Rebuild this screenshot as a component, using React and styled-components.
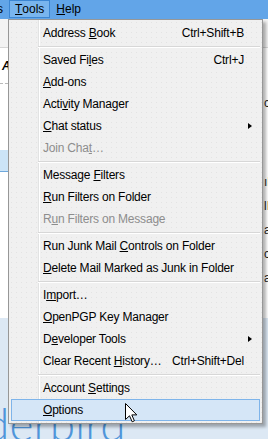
import React from "react";
import styled, { createGlobalStyle } from "styled-components";

const GlobalStyle = createGlobalStyle`
  html, body { margin: 0; padding: 0; }
  body {
    width: 268px;
    height: 439px;
    overflow: hidden;
    font-family: "Liberation Sans", Arial, sans-serif;
    font-size: 12px;
    color: #000;
  }
`;

/* ===== WINDOW BEHIND THE MENU ===== */
const Window = styled.div`
  position: relative;
  display: flex;
  flex-direction: column;
  width: 268px;
  height: 439px;
  overflow: hidden;
  background: #fff;
`;

const MenuBar = styled.div`
  display: flex;
  align-items: stretch;
  height: 19px;
  background: #62a5e8;
  flex-shrink: 0;
`;

const BarItem = styled.div`
  display: flex;
  align-items: center;
  padding: 0 5px;
  margin-left: ${(p) => p.$offset || 0}px;
  border: 1px solid ${(p) => (p.$open ? "#3c86d3" : "transparent")};
  background: ${(p) => (p.$open ? "#79b5ee" : "transparent")};
  box-sizing: border-box;
  height: 18px;
  u { text-decoration: underline; }
`;

const Toolbar = styled.div`
  height: 28px;
  flex-shrink: 0;
  background: #f3f3f3;
  border-bottom: 1px solid #d6d6d6;
`;

const Body = styled.div`
  display: flex;
  height: 270px;
  flex-shrink: 0;
`;

const FolderPane = styled.div`
  flex: 1;
  display: flex;
  flex-direction: column;
`;

const AccountRow = styled.div`
  height: 36px;
  display: flex;
  align-items: center;
  padding-left: 2px;
  font-weight: bold;
  font-style: italic;
  border-bottom: 1px dashed #b9b9b9;
  box-sizing: border-box;
`;

const FolderRow = styled.div`
  height: ${(p) => (p.$selected ? 21 : 22)}px;
  flex-shrink: 0;
  background: ${(p) => (p.$selected ? "#cce4f7" : "transparent")};
  border-bottom: ${(p) => (p.$selected ? "1px solid #6ea8dc" : "none")};
`;

const MessageStrip = styled.div`
  width: 6px;
  overflow: hidden;
  display: flex;
  flex-direction: column;
  padding-top: 44px;
  white-space: nowrap;
  color: #222;
`;

const MessageCell = styled.div`
  height: ${(p) => p.$h}px;
  line-height: ${(p) => p.$h}px;
  flex-shrink: 0;
  padding-left: 2px;
`;

const StartPane = styled.div`
  flex: 1;
  background: #dce8f4;
  display: flex;
  align-items: flex-end;
  overflow: hidden;
`;

const Logo = styled.div`
  font-family: Lato, "Open Sans", sans-serif;
  font-weight: 300;
  font-size: 46px;
  line-height: 1;
  color: #4f95da;
  white-space: nowrap;
  margin-left: -118px;
  margin-bottom: -8px;
`;

/* ===== DROPDOWN MENU ===== */
const Menu = styled.div`
  position: absolute;
  left: 8px;
  top: 19px;
  width: 255px;
  box-sizing: border-box;
  border: 1px solid #979797;
  padding: 2px;
  background-color: #f0f0f0;
  background-image:
    linear-gradient(to right, transparent 29px, #e2e3e3 29px, #e2e3e3 30px, #ffffff 30px, #ffffff 31px, transparent 31px),
    radial-gradient(circle, #e3e3e3 0.6px, transparent 1px);
  background-size: 100% 100%, 5px 5px;
  box-shadow: 3px 3px 3px rgba(0, 0, 0, 0.3);
`;

const Item = styled.div`
  position: relative;
  display: flex;
  align-items: center;
  height: 22px;
  box-sizing: border-box;
  padding: 0 15px 0 31px;
  letter-spacing: -0.2px;
  color: ${(p) => (p.$disabled ? "#8d8d8d" : "#000")};
  border: 1px solid ${(p) => (p.$active ? "#7eb4ea" : "transparent")};
  background: ${(p) => (p.$active ? "#d5e6f7" : "transparent")};
  white-space: nowrap;
  u { text-decoration: underline; }
`;

const Label = styled.span`
  flex: 1;
`;

const Shortcut = styled.span`
  margin-left: 8px;
`;

const SubArrow = styled.span`
  position: absolute;
  right: 7px;
  top: 7px;
  width: 0;
  height: 0;
  border-top: 3.5px solid transparent;
  border-bottom: 3.5px solid transparent;
  border-left: 4px solid #000;
`;

const Separator = styled.div`
  height: 5px;
  margin-left: 27px;
  display: flex;
  flex-direction: column;
  justify-content: center;
  &::before {
    content: "";
    height: 1px;
    background: #d7d7d7;
  }
  &::after {
    content: "";
    height: 1px;
    background: #ffffff;
  }
`;

const Cursor = styled.svg`
  position: absolute;
  left: 125px;
  top: 403px;
`;

const withKey = (text) => {
  const i = text.indexOf("&");
  if (i < 0) return text;
  return (
    <>
      {text.slice(0, i)}
      <u>{text[i + 1]}</u>
      {text.slice(i + 2)}
    </>
  );
};

const menu = [
  { label: "Address &Book", shortcut: "Ctrl+Shift+B" },
  "sep",
  { label: "Saved Fi&les", shortcut: "Ctrl+J" },
  { label: "&Add-ons" },
  { label: "Acti&vity Manager" },
  { label: "&Chat status", sub: true },
  { label: "Join Cha&t…", disabled: true },
  "sep",
  { label: "Message &Filters" },
  { label: "&Run Filters on Folder" },
  { label: "R&un Filters on Message", disabled: true },
  "sep",
  { label: "Run Junk Mail &Controls on Folder" },
  { label: "&Delete Mail Marked as Junk in Folder" },
  "sep",
  { label: "I&mport…" },
  { label: "&OpenPGP Key Manager" },
  { label: "D&eveloper Tools", sub: true },
  { label: "Clear Recent &History…", shortcut: "Ctrl+Shift+Del" },
  "sep",
  { label: "Account &Settings" },
  { label: "&Options", active: true },
];

const messageCells = [
  { h: 22, t: "c" },
  { h: 56, t: "" },
  { h: 24, t: "ıL" },
  { h: 24, t: "lI" },
  { h: 24, t: "a" },
  { h: 24, t: "c" },
  { h: 24, t: "a" },
];

export default function App() {
  return (
    <>
      <GlobalStyle />
      <Window>
        <MenuBar>
          <BarItem $offset={-9}>s</BarItem>
          <BarItem $open>
            <u>T</u>ools
          </BarItem>
          <BarItem>
            <u>H</u>elp
          </BarItem>
        </MenuBar>
        <Toolbar />
        <Body>
          <FolderPane>
            <AccountRow>Ac</AccountRow>
            <FolderRow />
            <FolderRow />
            <FolderRow />
            <FolderRow $selected />
          </FolderPane>
          <MessageStrip>
            {messageCells.map((c, i) => (
              <MessageCell key={i} $h={c.h}>
                {c.t}
              </MessageCell>
            ))}
          </MessageStrip>
        </Body>
        <StartPane>
          <Logo>Thunderbird</Logo>
        </StartPane>

        <Menu>
          {menu.map((m, i) =>
            m === "sep" ? (
              <Separator key={i} />
            ) : (
              <Item key={i} $disabled={m.disabled} $active={m.active}>
                <Label>{withKey(m.label)}</Label>
                {m.shortcut && <Shortcut>{m.shortcut}</Shortcut>}
                {m.sub && <SubArrow />}
              </Item>
            )
          )}
        </Menu>

        <Cursor width="13" height="20" viewBox="0 0 13 20">
          <path
            d="M0.5 0.5 L0.5 16.5 L4.5 12.8 L7.2 18.8 L9.4 17.8 L6.8 11.9 L11.8 11.9 Z"
            fill="#fff"
            stroke="#000"
            strokeWidth="1"
            strokeLinejoin="miter"
          />
        </Cursor>
      </Window>
    </>
  );
}
